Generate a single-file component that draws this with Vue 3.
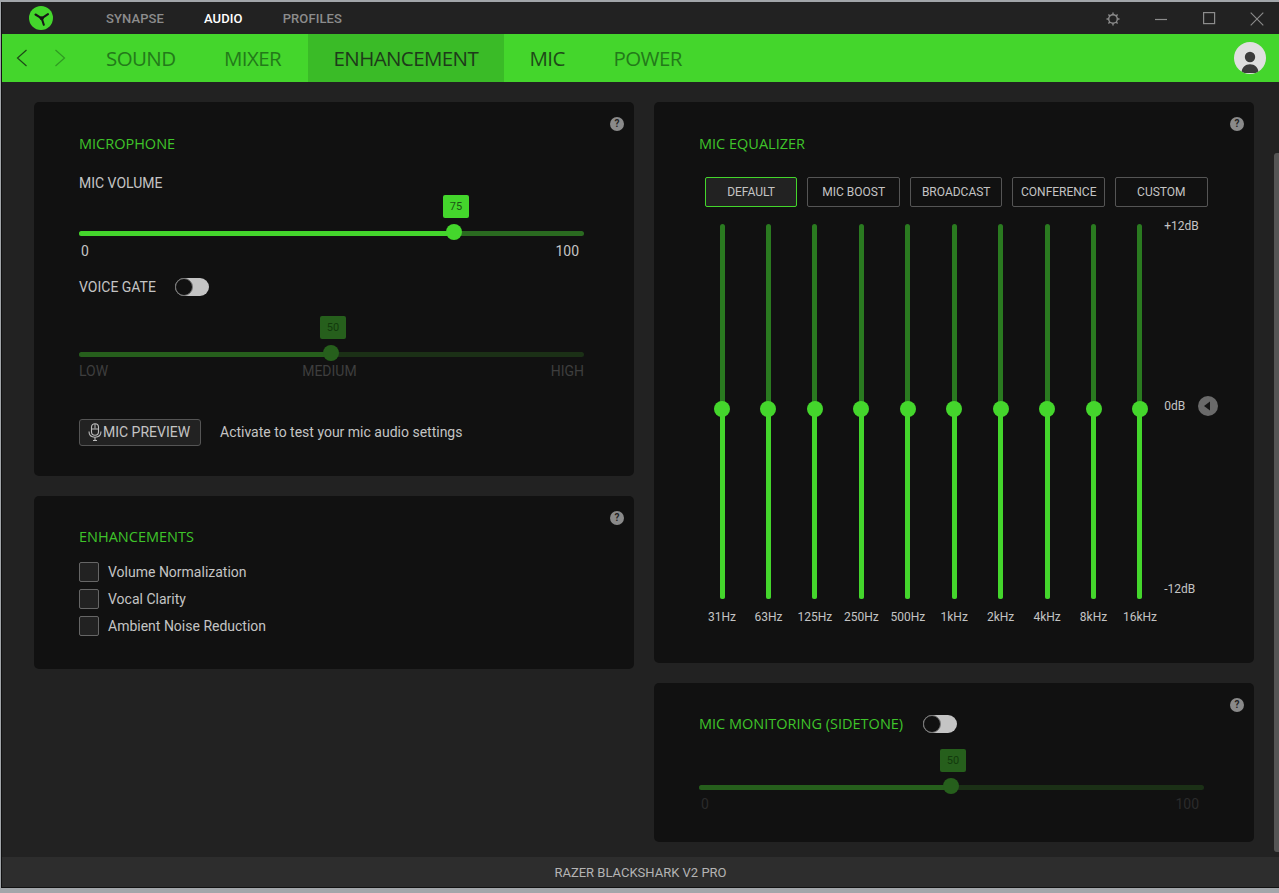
<script setup>
const topNav = [{ t: 'SYNAPSE' }, { t: 'AUDIO', on: true }, { t: 'PROFILES' }]
const tabs = [
  { t: 'SOUND', w: 118 },
  { t: 'MIXER', w: 109.5 },
  { t: 'ENHANCEMENT', w: 196, on: true },
  { t: 'MIC', w: 84, dark: true },
  { t: 'POWER', w: 120 }
]
const presets = ['DEFAULT', 'MIC BOOST', 'BROADCAST', 'CONFERENCE', 'CUSTOM']
const bands = ['31Hz', '63Hz', '125Hz', '250Hz', '500Hz', '1kHz', '2kHz', '4kHz', '8kHz', '16kHz']
const enhancements = ['Volume Normalization', 'Vocal Clarity', 'Ambient Noise Reduction']
</script>

<template>
  <div class="screen">
    <div class="window">
      <header class="titlebar">
        <svg class="logo" width="24" height="24" viewBox="0 0 24 24">
          <circle cx="12" cy="12" r="12" fill="#44d62c" />
          <path d="M12.700 12.300 L6.500 8.500 M12.700 12.300 L19 8.200 M12.700 12.300 L14.800 18.800" stroke="#161616" stroke-width="2.100" fill="none" stroke-linecap="round" />
          <circle cx="12.700" cy="12.300" r="2" fill="#161616" />
        </svg>
        <nav class="topnav">
          <span v-for="n in topNav" :key="n.t" :class="{ on: n.on }">{{ n.t }}</span>
        </nav>
        <div class="winbtns">
          <svg width="14" height="14" viewBox="0 0 14 14" class="gear">
            <circle cx="7" cy="7" r="4.300" fill="none" stroke="#8c8c8c" stroke-width="1.400" />
            <path d="M7 .5V2.600M7 11.400v2.100M.5 7h2.100M11.400 7h2.100M2.400 2.400l1.500 1.500M10.100 10.100l1.500 1.500M2.400 11.600l1.500-1.500M10.100 3.900l1.500-1.500" stroke="#8c8c8c" stroke-width="1.400" />
          </svg>
          <svg width="14" height="14" viewBox="0 0 14 14" class="min"><path d="M1 7.500H13" stroke="#8c8c8c" stroke-width="1.200" /></svg>
          <svg width="13" height="13" viewBox="0 0 13 13" class="max"><rect x=".6" y=".6" width="11" height="11" fill="none" stroke="#8c8c8c" stroke-width="1.200" /></svg>
          <svg width="14" height="14" viewBox="0 0 14 14" class="close"><path d="M.7.7 13.300 13.300M13.300.7.7 13.300" stroke="#8c8c8c" stroke-width="1.100" /></svg>
        </div>
      </header>

      <div class="greenbar">
        <div class="arrows">
          <svg width="12" height="18" viewBox="0 0 12 18"><path d="M10.500 1 1.500 9l9 8" fill="none" stroke="#1d4a17" stroke-width="1.200" /></svg>
          <svg width="12" height="18" viewBox="0 0 12 18"><path d="M1.500 1l9 8-9 8" fill="none" stroke="#2f9a22" stroke-width="1.200" /></svg>
        </div>
        <nav class="tabs">
          <span v-for="t in tabs" :key="t.t" class="tab" :class="{ on: t.on, dark: t.dark }" :style="{ width: t.w + 'px' }">{{ t.t }}</span>
        </nav>
        <svg class="avatar" width="32" height="32" viewBox="0 0 32 32">
          <defs><clipPath id="av"><circle cx="16" cy="16" r="16" /></clipPath></defs>
          <circle cx="16" cy="16" r="16" fill="#e0e0e0" />
          <g clip-path="url(#av)">
            <circle cx="16" cy="15" r="5.200" fill="#3c3c3c" />
            <path d="M7.500 31c0-6 4-8.800 8.500-8.800S24.500 25 24.500 31z" fill="#3c3c3c" />
          </g>
        </svg>
      </div>

      <main class="content">
        <div class="col">
          <section class="card mic">
            <span class="help">?</span>
            <h2>MICROPHONE</h2>
            <div class="label vol-label">MIC VOLUME</div>
            <div class="slider s1">
              <span class="bubble" style="left: 74.26%">75</span>
              <div class="track"><div class="fill" style="width: 74.26%"></div></div>
              <span class="thumb" style="left: 74.26%"></span>
            </div>
            <div class="ends light"><span class="pad-l">0</span><span class="pad-r">100</span></div>
            <div class="gate">
              <span class="label">VOICE GATE</span>
              <span class="toggle"><i></i></span>
            </div>
            <div class="slider s2 dim">
              <span class="bubble" style="left: 49.9%">50</span>
              <div class="track"><div class="fill" style="width: 49.9%"></div></div>
              <span class="thumb" style="left: 49.9%"></span>
            </div>
            <div class="ends gray"><span>LOW</span><span>MEDIUM</span><span>HIGH</span></div>
            <div class="preview">
              <button class="prevbtn">
                <svg width="14" height="18" viewBox="0 0 14 18">
                  <rect x="3.500" y=".7" width="7" height="11.500" rx="3.500" fill="none" stroke="#bdbdbd" stroke-width="1.100" />
                  <path d="M7 1v4.500M3.500 6h7" stroke="#bdbdbd" stroke-width="1" />
                  <path d="M1 8.500c0 3.600 2.600 5.700 6 5.700s6-2.100 6-5.700M7 14.200V17.500M5 17.500h4" fill="none" stroke="#bdbdbd" stroke-width="1.100" />
                </svg>
                MIC PREVIEW
              </button>
              <span class="hint">Activate to test your mic audio settings</span>
            </div>
          </section>

          <section class="card enh">
            <span class="help">?</span>
            <h2>ENHANCEMENTS</h2>
            <label v-for="e in enhancements" :key="e" class="check"><i></i>{{ e }}</label>
          </section>
        </div>

        <div class="col">
          <section class="card eq">
            <span class="help">?</span>
            <h2>MIC EQUALIZER</h2>
            <div class="presets">
              <button v-for="(p, i) in presets" :key="p" :class="{ on: i === 0 }">{{ p }}</button>
            </div>
            <div class="eqbody">
              <div class="bands">
                <div v-for="b in bands" :key="b" class="band">
                  <div class="vtrack"><span class="vfill"></span><span class="vthumb"></span></div>
                  <span class="hz">{{ b }}</span>
                </div>
              </div>
              <div class="db">
                <span>+12dB</span>
                <span class="zero">0dB
                  <svg width="20" height="20" viewBox="0 0 20 20"><circle cx="10" cy="10" r="10" fill="#6a6a6a" /><path d="M6 10l6-4.500v9z" fill="#151515" /></svg>
                </span>
                <span>-12dB</span>
              </div>
            </div>
          </section>

          <section class="card side">
            <span class="help">?</span>
            <div class="side-head">
              <h2>MIC MONITORING (SIDETONE)</h2>
              <span class="toggle"><i></i></span>
            </div>
            <div class="slider s3 dim">
              <span class="bubble" style="left: 49.9%">50</span>
              <div class="track"><div class="fill" style="width: 49.9%"></div></div>
              <span class="thumb" style="left: 49.9%"></span>
            </div>
            <div class="ends faint"><span class="pad-l2">0</span><span class="pad-r2">100</span></div>
          </section>
        </div>
        <span class="scroll"></span>
      </main>

      <footer class="footer">RAZER BLACKSHARK V2 PRO</footer>
    </div>
  </div>
</template>

<style>
html, body { margin: 0; background: #a2a6aa; overflow: hidden; }
</style>

<style scoped>
.screen { width: 1279px; height: 893px; padding: 2px 0 5px 1px; box-sizing: border-box; font-family: Roboto, "Liberation Sans", sans-serif; color: #c4c4c4; }
.window { height: 886px; background: #222; display: flex; flex-direction: column; border-left: 1px solid #111; border-bottom: 1px solid #111; box-sizing: border-box; }
.titlebar { height: 32px; flex: none; display: flex; align-items: center; background: #222; }
.logo { margin: 0 0 0 27px; flex: none; }
.topnav { display: flex; gap: 40px; margin-left: 53px; font-size: 13px; letter-spacing: .1px; color: #8c8c8c; font-weight: 500; }
.topnav .on { color: #fff; }
.winbtns { margin-left: auto; display: flex; align-items: center; padding-top: 1px; }
.gear { margin-right: 34px; }
.min { margin-right: 35px; }
.max { margin-right: 34px; }
.close { margin-right: 15px; }
.greenbar { height: 48px; flex: none; background: #44d62c; display: flex; align-items: center; }
.arrows { display: flex; gap: 26px; margin-left: 14px; width: 64.500px; flex: none; }
.tabs { display: flex; height: 100%; font-family: "Open Sans", Roboto, sans-serif; }
.tab { display: flex; align-items: center; box-sizing: border-box; padding-left: 25.500px; font-size: 20.500px; letter-spacing: -.6px; color: #237a1a; white-space: nowrap; }
.tab.on { background: #3abb27; color: #1e3a1a; }
.tab.dark { color: #1e4a18; }
.avatar { margin-left: auto; margin-right: 13px; }
.content { flex: 1; position: relative; display: flex; gap: 20px; padding: 20px 0 15px 32px; box-sizing: border-box; min-height: 0; }
.col { width: 600px; display: flex; flex-direction: column; gap: 20px; }
.card { position: relative; background: #111; border-radius: 5px; padding: 0 50px 0 45px; box-sizing: border-box; flex: none; }
.help { position: absolute; right: 10px; top: 15px; width: 14px; height: 14px; border-radius: 50%; background: #8a8a8a; color: #222; font-size: 10px; font-weight: 700; line-height: 14px; text-align: center; }
h2 { margin: 0; font-family: "Open Sans", Roboto, sans-serif; font-weight: 400; font-size: 14.500px; line-height: 20px; color: #3fc42a; white-space: nowrap; }
.label { font-size: 14px; line-height: 18px; color: #c4c4c4; }
.mic { height: 374px; padding-top: 32px; }
.vol-label { margin-top: 20px; }
.slider { position: relative; height: 5px; }
.s1 { margin-top: 39px; }
.s2 { margin-top: 56px; }
.s3 { margin-top: 51px; }
.track { height: 5px; border-radius: 3px; background: #2a6a20; overflow: hidden; }
.fill { height: 100%; background: #44d62c; }
.thumb { position: absolute; top: -7px; width: 16px; height: 16px; margin-left: -8px; border-radius: 50%; background: #44d62c; }
.bubble { position: absolute; top: -36px; width: 26px; height: 23px; margin-left: -11px; border-radius: 2px; background: #44d62c; color: #1c5414; font-size: 11px; line-height: 23px; text-align: center; }
.dim .track { background: #1b3016; }
.dim .fill { background: #265f1c; }
.dim .thumb { background: #265f1c; }
.dim .bubble { background: #265f1c; color: #123a0c; }
.ends { display: flex; justify-content: space-between; font-size: 14px; line-height: 18px; }
.light { margin-top: 6px; color: #c4c4c4; }
.pad-l { padding-left: 2px; }
.pad-r { padding-right: 5px; }
.gray { margin-top: 5px; color: #3e3e3e; }
.faint { margin-top: 5px; color: #2b2b2b; }
.pad-l2 { padding-left: 2px; }
.pad-r2 { padding-right: 5px; }
.gate { display: flex; align-items: center; gap: 19px; margin-top: 18px; }
.toggle { position: relative; display: block; width: 34px; height: 18px; border-radius: 9px; background: #c4c4c4; flex: none; }
.toggle i { position: absolute; left: 0; top: 0; width: 16px; height: 16px; border: 1px solid #777; border-radius: 50%; background: #111; }
.preview { display: flex; align-items: center; gap: 19px; margin-top: 39px; }
.prevbtn { display: flex; align-items: center; gap: 1px; width: 122px; height: 27px; padding: 0 0 1px 8px; box-sizing: border-box; border: 1px solid #555; border-radius: 3px; background: #222; color: #c4c4c4; font: 14px Roboto, sans-serif; white-space: nowrap; }
.hint { padding-bottom: 1px; font-size: 14px; color: #c4c4c4; white-space: nowrap; }
.enh { height: 173px; padding-top: 31px; }
.check { display: flex; align-items: center; gap: 9px; height: 20px; margin-top: 7px; font-size: 14px; color: #c4c4c4; }
.enh h2 { margin-bottom: 15px; }
.check i { width: 18px; height: 18px; border: 1px solid #666; border-radius: 2px; background: #222; flex: none; }
.eq { height: 561px; padding-top: 32px; }
.presets { display: flex; gap: 10px; margin: 23px 0 0 5.800px; width: 502.800px; }
.presets button { flex: 1; min-width: 0; height: 30px; padding: 0; box-sizing: border-box; border: 1px solid #555; border-radius: 2px; background: #111; color: #c4c4c4; font: 12px Roboto, sans-serif; }
.presets button.on { border-color: #44d62c; background: #222; }
.eqbody { display: flex; margin-top: 17px; margin-left: -.2px; }
.bands { display: flex; flex: none; width: 464.400px; }
.band { flex: 1; display: flex; flex-direction: column; align-items: center; }
.vtrack { position: relative; width: 5px; height: 375px; border-radius: 3px; background: #2a7a20; }
.vfill { position: absolute; left: 0; right: 0; top: 185px; bottom: 0; border-radius: 0 0 3px 3px; background: #44d62c; }
.vthumb { position: absolute; left: -5.500px; top: 177px; width: 16px; height: 16px; border-radius: 50%; background: #44d62c; }
.hz { margin-top: 10px; font-size: 12px; line-height: 17px; color: #c4c4c4; white-space: nowrap; }
.db { flex: none; width: 60px; height: 377px; margin-top: -5px; padding-left: 1px; font-size: 12px; color: #c4c4c4; display: flex; flex-direction: column; justify-content: space-between; }
.db > span { display: flex; align-items: center; gap: 13px; line-height: 14px; }
.zero { height: 20px; margin-bottom: 3px; }
.side { height: 159px; padding-top: 31px; }
.side-head { display: flex; align-items: center; gap: 20px; }
.scroll { position: absolute; right: 0; top: 71px; width: 5px; height: 699px; border-radius: 3px 0 0 3px; background: #555; }
.footer { height: 30px; flex: none; background: #2d2d2d; display: flex; align-items: center; justify-content: center; font-size: 13px; color: #b4b4b4; }
</style>
